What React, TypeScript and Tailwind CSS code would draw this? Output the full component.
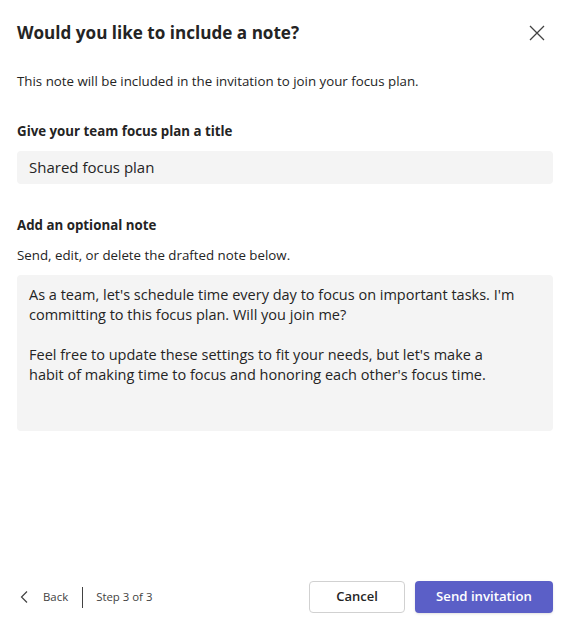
import React from "react";

export default function App() {
  return (
    <div className="w-[568px] h-[627px] bg-white flex flex-col text-[#242424] font-['Open_Sans',sans-serif]">
      <div className="flex items-center justify-between pl-[17px] pr-[22px] pt-[13px] h-[52px]">
        <h1 className="text-[17.1px] font-bold leading-[28px]">Would you like to include a note?</h1>
        <svg width="18" height="18" viewBox="0 0 18 18" className="text-[#424242]">
          <path d="M2 2 L16 16 M16 2 L2 16" stroke="currentColor" strokeWidth="1.3" />
        </svg>
      </div>
      <div className="pl-[17px] pr-[15px] flex flex-col">
        <p className="mt-[19px] text-[13.3px] leading-[20px]">This note will be included in the invitation to join your focus plan.</p>
        <p className="mt-[30px] text-[13.3px] font-bold leading-[20px]">Give your team focus plan a title</p>
        <div className="mt-[10px] h-[33px] rounded-[4px] bg-[#f4f4f4] flex items-center px-[12px] text-[15px]">Shared focus plan</div>
        <p className="mt-[31px] text-[13.3px] font-bold leading-[20px]">Add an optional note</p>
        <p className="mt-[10px] text-[13.3px] leading-[20px]">Send, edit, or delete the drafted note below.</p>
        <div className="mt-[10px] h-[156px] rounded-[4px] bg-[#f4f4f4] pl-[12px] pr-[8px] pt-[10px] text-[14.5px] leading-[20px] whitespace-nowrap">
          <p>As a team, let's schedule time every day to focus on important tasks. I'm<br />committing to this focus plan. Will you join me?</p>
          <p className="mt-[20px]">Feel free to update these settings to fit your needs, but let's make a<br />habit of making time to focus and honoring each other's focus time.</p>
        </div>
      </div>
      <div className="mt-auto mb-[14px] pl-[17px] pr-[15px] flex items-center justify-between h-[32px]">
        <div className="flex items-center text-[11.4px] text-[#424242]">
          <svg width="12" height="14" viewBox="0 0 12 14" className="ml-[2px]">
            <path d="M8 1.5 L2.5 7 L8 12.5" stroke="currentColor" strokeWidth="1.2" fill="none" />
          </svg>
          <span className="ml-[12px]">Back</span>
          <span className="ml-[14px] w-px h-[21px] bg-[#424242]" />
          <span className="ml-[13px]">Step 3 of 3</span>
        </div>
        <div className="flex items-center gap-[10px]">
          <button className="w-[96px] h-[32px] rounded-[4px] border border-[#d1d1d1] bg-white text-[13px] font-semibold">Cancel</button>
          <button className="w-[138px] h-[32px] rounded-[4px] bg-[#5b5fc7] text-white text-[13.2px] font-semibold shadow-sm">Send invitation</button>
        </div>
      </div>
    </div>
  );
}
